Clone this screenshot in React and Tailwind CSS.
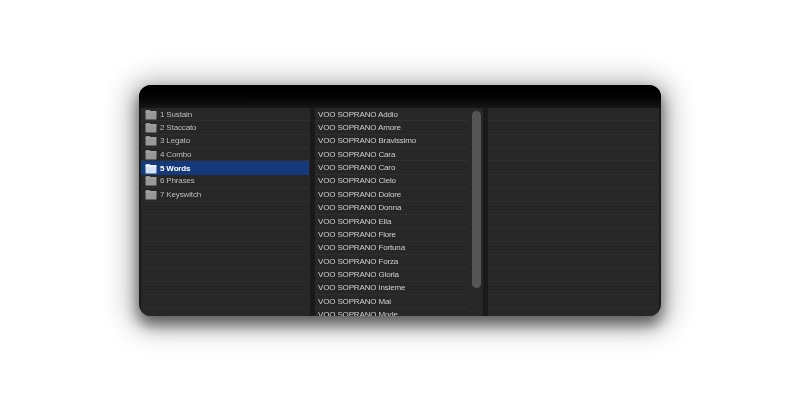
import React from "react";

const FOLDERS = ["1 Sustain", "2 Staccato", "3 Legato", "4 Combo", "5 Words", "6 Phrases", "7 Keyswitch"];
const WORDS = ["Addio", "Amore", "Bravissimo", "Cara", "Caro", "Cielo", "Dolore", "Donna", "Ella", "Fiore", "Fortuna", "Forza", "Gloria", "Insieme", "Mai", "Mode"];
const SELECTED = "5 Words";

function Folder({ light }) {
  return (
    <svg width="12" height="10" viewBox="0 0 12 10" className="shrink-0">
      <path d="M0.5 1 Q0.5 0 1.5 0 H4.5 L5.5 1 H10.5 Q11.5 1 11.5 2 V9 Q11.5 9.5 11 9.5 H1 Q0.5 9.5 0.5 9 Z" fill={light ? "#d5e2f5" : "#979797"} />
      <rect x="0.5" y="1.5" width="11" height="1" fill={light ? "#ffffff" : "#a8a8a8"} />
    </svg>
  );
}

function Row({ children, selected, className = "" }) {
  return (
    <div className={`h-[13.36px] shrink-0 flex items-center pt-[1px] ${className} ${selected ? "bg-[#143a7c]" : "border-b border-dotted border-[#373737]"}`}>
      {children}
    </div>
  );
}

export default function App() {
  const blanks = Array.from({ length: 16 });
  return (
    <div className="w-[800px] h-[400px] bg-white pt-[85px] pl-[139px] font-['Liberation_Sans',sans-serif]">
      <div className="w-[522px] h-[231px] rounded-[12px] overflow-hidden bg-[#1a1a1a] flex flex-col shadow-[0_8px_14px_1px_rgba(0,0,0,0.5),0_4px_28px_8px_rgba(0,0,0,0.3)]">
        <div className="h-[23px] shrink-0 bg-gradient-to-b from-[#000000] to-[#171717]" />
        <div className="flex-1 flex min-h-0 px-[2px]">
          {/* folders */}
          <div className="w-[169px] bg-[#272727] overflow-hidden flex flex-col">
            {FOLDERS.map((name) => (
              <Row key={name} selected={name === SELECTED} className="pl-[4px] gap-[3px] mr-[1px]">
                <Folder light={name === SELECTED} />
                <span className={`text-[8px] tracking-[-0.15px] blur-[0.25px] ${name === SELECTED ? "text-white font-bold" : "text-[#bcbcbc]"}`}>{name}</span>
              </Row>
            ))}
            {blanks.slice(0, 9).map((_, i) => (
              <Row key={i} className="ml-[4px] mr-[4px]" />
            ))}
          </div>
          <div className="w-[5px] bg-[#1a1a1a]" />
          {/* sounds */}
          <div className="relative w-[168px] bg-[#272727] overflow-hidden flex flex-col">
            {WORDS.map((w) => (
              <Row key={w} className="pl-[3px] mr-[16px]">
                <span className="text-[8px] tracking-[-0.15px] text-[#d0d0d0] whitespace-nowrap blur-[0.25px]">VOO SOPRANO {w}</span>
              </Row>
            ))}
            <div className="absolute left-[157px] top-[3px] w-[9px] h-[177px] rounded-full bg-[#555555]" />
          </div>
          <div className="w-[5px] bg-[#1a1a1a]" />
          {/* empty column */}
          <div className="flex-1 bg-[#272727] overflow-hidden flex flex-col">
            {blanks.map((_, i) => (
              <Row key={i} className="mx-[1px]" />
            ))}
          </div>
        </div>
      </div>
    </div>
  );
}
